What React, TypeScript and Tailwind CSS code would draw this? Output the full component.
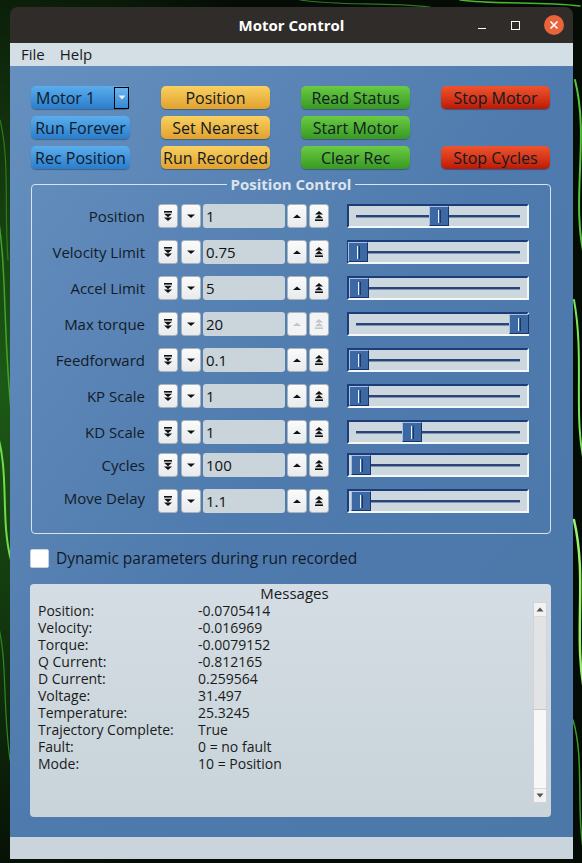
import React from 'react';

type Row = { label: string; value: string; handle: number; mt: string; disabled?: boolean; labelPad?: string };

const rows: Row[] = [
  { label: 'Position', value: '1', handle: 82, mt: 'mt-[10px]' },
  { label: 'Velocity Limit', value: '0.75', handle: 1, mt: 'mt-[12px]' },
  { label: 'Accel Limit', value: '5', handle: 2, mt: 'mt-[12px]' },
  { label: 'Max torque', value: '20', handle: 162, mt: 'mt-[12px]', disabled: true },
  { label: 'Feedforward', value: '0.1', handle: 2, mt: 'mt-[12px]' },
  { label: 'KP Scale', value: '1', handle: 2, mt: 'mt-[12px]' },
  { label: 'KD Scale', value: '1', handle: 55, mt: 'mt-[12px]' },
  { label: 'Cycles', value: '100', handle: 4, mt: 'mt-[9px]' },
  { label: 'Move Delay', value: '1.1', handle: 4, mt: 'mt-[12px]', labelPad: 'pb-[6px]' },
];

const messages: [string, string][] = [
  ['Position:', '-0.0705414'],
  ['Velocity:', '-0.016969'],
  ['Torque:', '-0.0079152'],
  ['Q Current:', '-0.812165'],
  ['D Current:', '0.259564'],
  ['Voltage:', '31.497'],
  ['Temperature:', '25.3245'],
  ['Trajectory Complete:', 'True'],
  ['Fault:', '0 = no fault'],
  ['Mode:', '10 = Position'],
];

const btnColors = {
  blue: 'bg-linear-to-b from-[#5aaeed] to-[#2a7dcc]',
  yellow: 'bg-linear-to-b from-[#f8d160] to-[#e2a12a]',
  green: 'bg-linear-to-b from-[#6acb43] to-[#379a22]',
  red: 'bg-linear-to-b from-[#f0532c] to-[#bd1703]',
};

const Btn = ({ color, children }: { color: keyof typeof btnColors; children: React.ReactNode }) => (
  <button
    className={`h-[23px] rounded-[5px] text-[16px] leading-none text-[#111a26] shadow-[0_1px_1px_rgba(0,0,0,0.3)] ${btnColors[color]}`}
  >
    {children}
  </button>
);

// small arrow glyphs used by the spin buttons
const Arrow = ({ kind, off }: { kind: 'dd' | 'd' | 'u' | 'uu'; off?: boolean }) => {
  const fill = off ? '#c3c6c9' : '#111';
  return (
    <svg width="10" height="12" viewBox="0 0 10 12">
      {kind === 'dd' && (
        <g fill={fill}>
          <rect x="1" y="1" width="8" height="1.6" />
          <path d="M1 3.8 L9 3.8 L5 7.2 Z" />
          <path d="M1 7.6 L9 7.6 L5 11 Z" />
        </g>
      )}
      {kind === 'd' && <path d="M1 4.5 L9 4.5 L5 8 Z" fill={fill} />}
      {kind === 'u' && <path d="M1 8 L9 8 L5 4.5 Z" fill={fill} />}
      {kind === 'uu' && (
        <g fill={fill}>
          <path d="M1 4.4 L9 4.4 L5 1 Z" />
          <path d="M1 8.2 L9 8.2 L5 4.8 Z" />
          <rect x="1" y="9.4" width="8" height="1.6" />
        </g>
      )}
    </svg>
  );
};

const SpinBtn = ({ kind, off }: { kind: 'dd' | 'd' | 'u' | 'uu'; off?: boolean }) => (
  <div
    className={`w-[20px] h-full flex items-center justify-center rounded-[3px] border border-[#aab4bc] ${
      off ? 'bg-[#f1f3f4]' : 'bg-linear-to-b from-[#fbfbfb] to-[#e8eaec]'
    }`}
  >
    <Arrow kind={kind} off={off} />
  </div>
);

const Slider = ({ handle }: { handle: number }) => (
  <div className="relative w-[182px] h-[24px] bg-[#cdd7de] border-2 border-t-[#1d3d79] border-l-[#1d3d79] border-b-[#f4f7f9] border-r-[#f4f7f9] flex items-center px-[7px]">
    <div className="w-full h-[3px] bg-[#2b4676] border-b border-[#7d93b3]" />
    <div
      className="absolute top-0 w-[20px] h-[20px] bg-[#3c69a4] border border-t-[#a8c0e0] border-l-[#a8c0e0] border-b-[#173566] border-r-[#173566] flex items-center justify-center"
      style={{ left: handle - 2 }}
    >
      <div className="w-[3px] h-[13px] border-l border-[#eef3f9] border-r border-r-[#1c3563]" />
    </div>
  </div>
);

export default function App() {
  return (
    <div className="relative w-[582px] h-[863px] overflow-hidden bg-[#071006] font-['Open_Sans','Noto_Sans',sans-serif]">
      {/* desktop wallpaper streaks */}
      <svg className="absolute inset-0" width="582" height="863" viewBox="0 0 582 863">
        <defs>
          <radialGradient id="glowL" cx="0" cy="0.45" r="0.6">
            <stop offset="0" stopColor="#1d5a16" />
            <stop offset="1" stopColor="#050b05" />
          </radialGradient>
        </defs>
        <rect width="582" height="863" fill="url(#glowL)" />
        <g fill="none" strokeLinecap="round">
          <path d="M-5 200 C 8 260, 2 330, 12 420" stroke="#3fa52a" strokeWidth="1.5" />
          <path d="M-4 430 C 10 470, 0 520, 11 560" stroke="#6fdc4a" strokeWidth="2" />
          <path d="M0 120 C 10 160, 4 210, 8 260" stroke="#2c7c1e" strokeWidth="1.2" />
          <path d="M-3 620 C 8 660, 2 700, 10 760" stroke="#2f8a22" strokeWidth="1.2" />
          <path d="M575 80 C 590 140, 570 200, 585 260" stroke="#58c43a" strokeWidth="2" />
          <path d="M574 300 C 585 360, 572 420, 586 470" stroke="#7be656" strokeWidth="2" />
          <path d="M574 520 C 588 580, 572 640, 586 700" stroke="#9af070" strokeWidth="2.5" />
          <path d="M573 720 C 585 760, 575 810, 585 860" stroke="#3a9a28" strokeWidth="1.5" />
          <path d="M300 0 C 340 6, 380 2, 430 7" stroke="#2b7a1d" strokeWidth="1.2" />
          <path d="M460 0 C 500 5, 540 1, 580 6" stroke="#4db332" strokeWidth="1.5" />
        </g>
      </svg>

      <div className="relative mt-[7px] ml-[10px] w-[563px] h-[852px] flex flex-col rounded-t-[8px] overflow-hidden">
        {/* title bar */}
        <div className="relative h-[36px] shrink-0 bg-[#2f2c2a] flex items-center justify-center">
          <span className="text-white font-bold text-[15px]">Motor Control</span>
          <div className="absolute right-[9px] top-0 h-full flex items-center gap-[20px]">
            <div className="w-[8px] h-[1.5px] bg-white mt-[7px]" />
            <div className="ml-[5px] w-[9px] h-[9px] border-[1.5px] border-white" />
            <div className="ml-[4px] w-[20px] h-[20px] rounded-full bg-[#e9643a] flex items-center justify-center">
              <svg width="10" height="10" viewBox="0 0 10 10">
                <path d="M1.5 1.5 L8.5 8.5 M8.5 1.5 L1.5 8.5" stroke="white" strokeWidth="1.6" />
              </svg>
            </div>
          </div>
        </div>

        {/* menu bar */}
        <div className="h-[23px] shrink-0 bg-[#d4dee5] flex items-center gap-[15px] pl-[11px] text-[15px] text-[#1a1a1a]">
          <span>File</span>
          <span>Help</span>
        </div>

        {/* central area */}
        <div className="flex-1 bg-linear-to-br from-[#6690bf] via-[#4f7aad] to-[#4c77a9] pl-[20px] pr-[22px] pt-[20px]">
          <div className="ml-[1px] grid grid-cols-[99px_109px_109px_109px] gap-x-[31px] gap-y-[7px]">
            <div className="h-[23px] rounded-[5px] bg-linear-to-b from-[#5aaeed] to-[#2a7dcc] shadow-[0_1px_1px_rgba(0,0,0,0.3)] flex items-center pl-[5px] pr-[1px] text-[16px] text-[#111a26]">
              <span className="flex-1">Motor 1</span>
              <div className="w-[15px] h-[22px] border border-black bg-linear-to-b from-[#6bb6ee] to-[#3787d2] flex items-center justify-center">
                <svg width="8" height="5" viewBox="0 0 8 5">
                  <path d="M0.5 0.5 L7.5 0.5 L4 4.5 Z" fill="#e6eef6" />
                </svg>
              </div>
            </div>
            <Btn color="yellow">Position</Btn>
            <Btn color="green">Read Status</Btn>
            <Btn color="red">Stop Motor</Btn>
            <Btn color="blue">Run Forever</Btn>
            <Btn color="yellow">Set Nearest</Btn>
            <Btn color="green">Start Motor</Btn>
            <div />
            <Btn color="blue">Rec Position</Btn>
            <Btn color="yellow">Run Recorded</Btn>
            <Btn color="green">Clear Rec</Btn>
            <Btn color="red">Stop Cycles</Btn>
          </div>

          {/* position control group */}
          <fieldset className="mt-[5px] ml-[1px] w-[520px] border border-[#d9e3ec] rounded-[4px] pb-[20px]">
            <legend className="mx-auto px-[4px] text-[15px] leading-[20px] font-bold text-[#dbe4ed]">Position Control</legend>
            {rows.map((r) => (
              <div key={r.label} className={`flex items-center h-[24px] ${r.mt}`}>
                <div className={`w-[113px] text-right text-[15px] text-[#121c28] ${r.labelPad ?? ''}`}>{r.label}</div>
                <div className="ml-[13px] flex h-full">
                  <SpinBtn kind="dd" />
                  <div className="ml-[3px]">
                    <SpinBtn kind="d" />
                  </div>
                  <div className="ml-[2px] w-[82px] h-full rounded-[3px] bg-[#c9d4db] pl-[3px] flex items-center text-[15px] text-[#111]">
                    {r.value}
                  </div>
                  <div className="ml-[2px]">
                    <SpinBtn kind="u" off={r.disabled} />
                  </div>
                  <div className="ml-[2px]">
                    <SpinBtn kind="uu" off={r.disabled} />
                  </div>
                </div>
                <div className="ml-[18px]">
                  <Slider handle={r.handle} />
                </div>
              </div>
            ))}
          </fieldset>

          <label className="mt-[15px] h-[19px] flex items-center gap-[7px] text-[15.5px] text-[#0f1a2a]">
            <span className="w-[19px] h-[19px] bg-white border border-[#c9d3da] rounded-[2px]" />
            Dynamic parameters during run recorded
          </label>

          {/* messages */}
          <div className="mt-[16px] w-[521px] h-[233px] rounded-[4px] bg-linear-to-b from-[#d4dde3] to-[#c8d3da] flex">
            <div className="flex-1 pl-[8px] pt-0 text-[14px] text-[#1b1b1b]">
              <div className="text-center text-[15px] leading-[18px] pl-[18px]">Messages</div>
              {messages.map(([k, v]) => (
                <div key={k} className="flex leading-[17px]">
                  <span className="w-[160px]">{k}</span>
                  <span>{v}</span>
                </div>
              ))}
            </div>
            <div className="mt-[18px] mr-[4px] w-[14px] h-[201px] flex flex-col border border-[#d0d4d8] bg-[#f7f7f7]">
              <div className="h-[14px] flex items-center justify-center bg-[#f2f2f2] border-b border-[#d8dbde]">
                <svg width="8" height="5" viewBox="0 0 8 5">
                  <path d="M0.5 4.5 L7.5 4.5 L4 0.5 Z" fill="#555" />
                </svg>
              </div>
              <div className="h-[93px] bg-[#e1e3e5] border-b border-[#c4c8cc]" />
              <div className="flex-1" />
              <div className="h-[14px] flex items-center justify-center bg-[#f2f2f2] border-t border-[#d8dbde]">
                <svg width="8" height="5" viewBox="0 0 8 5">
                  <path d="M0.5 0.5 L7.5 0.5 L4 4.5 Z" fill="#555" />
                </svg>
              </div>
            </div>
          </div>
        </div>

        {/* status bar */}
        <div className="h-[22px] shrink-0 bg-[#c9d4dc]" />
      </div>
    </div>
  );
}
